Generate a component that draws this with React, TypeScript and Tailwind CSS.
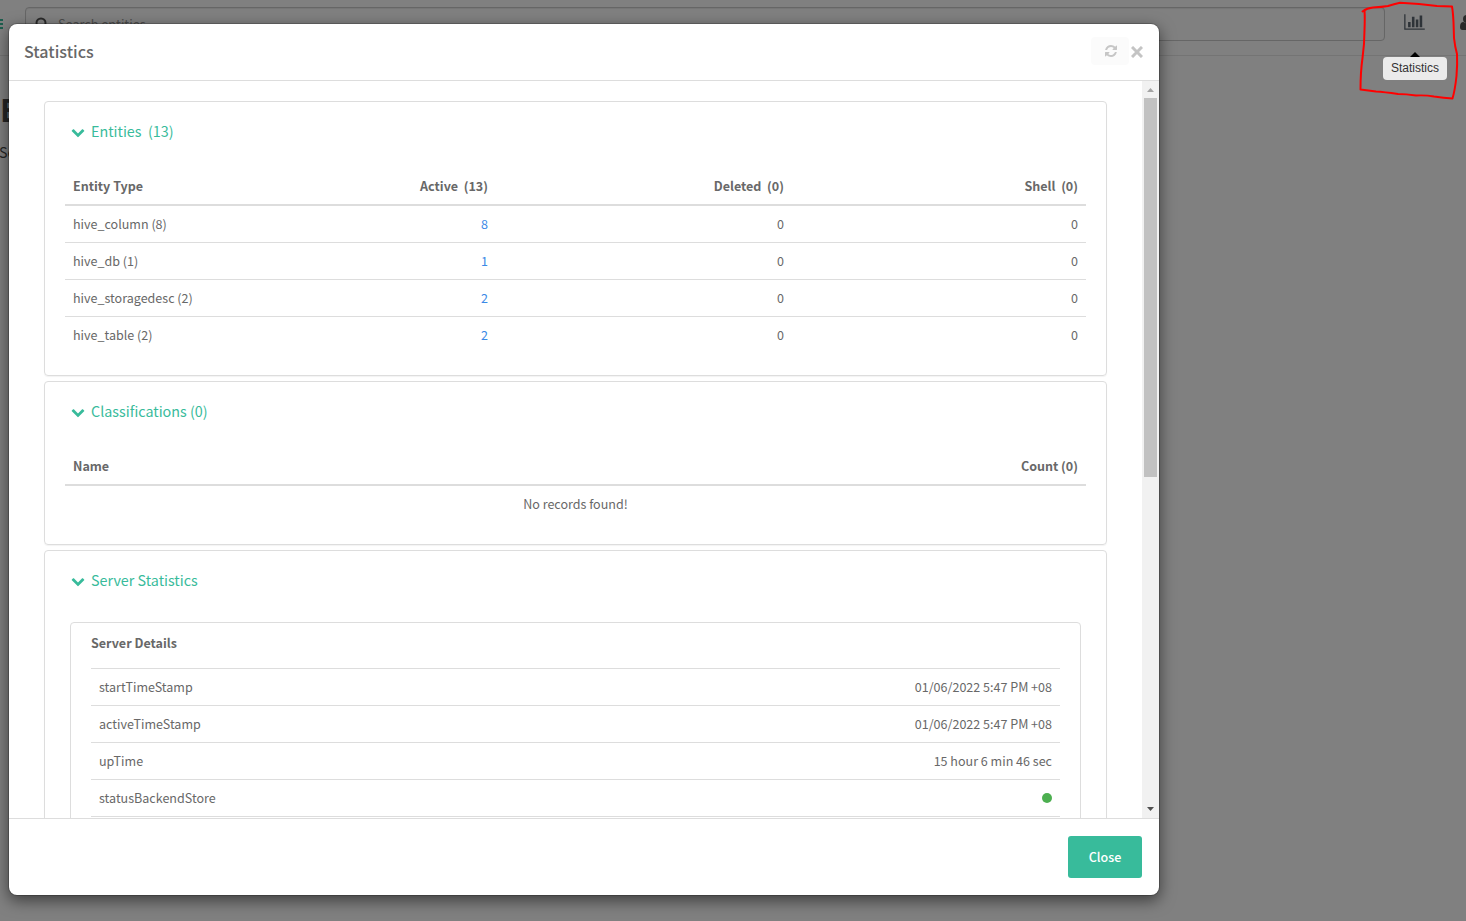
import React from 'react'

interface EntityRow {
  name: string
  active: number
  deleted: number
  shell: number
}

interface ServerRow {
  label: string
  value?: string
}

const ENTITIES: EntityRow[] = [
  { name: 'hive_column (8)', active: 8, deleted: 0, shell: 0 },
  { name: 'hive_db (1)', active: 1, deleted: 0, shell: 0 },
  { name: 'hive_storagedesc (2)', active: 2, deleted: 0, shell: 0 },
  { name: 'hive_table (2)', active: 2, deleted: 0, shell: 0 },
]

const SERVER_DETAILS: ServerRow[] = [
  { label: 'startTimeStamp', value: '01/06/2022 5:47 PM +08' },
  { label: 'activeTimeStamp', value: '01/06/2022 5:47 PM +08' },
  { label: 'upTime', value: '15 hour 6 min 46 sec' },
  { label: 'statusBackendStore' },
]

function ChevronDown() {
  return (
    <svg viewBox="0 0 1792 1792" className="h-[14px] w-[14px] fill-current">
      <path d="M1683 808l-742 741q-19 19-45 19t-45-19l-742-741q-19-19-19-45.5t19-45.5l166-165q19-19 45-19t45 19l531 531 531-531q19-19 45-19t45 19l166 165q19 19 19 45.5t-19 45.5z" />
    </svg>
  )
}

function RefreshIcon() {
  return (
    <svg viewBox="0 0 1792 1792" className="h-[14px] w-[14px] fill-current">
      <path d="M1639 1056q0 5-1 7-64 268-268 434.5t-478 166.5q-146 0-282.5-55t-243.5-157l-129 129q-19 19-45 19t-45-19-19-45v-448q0-26 19-45t45-19h448q26 0 45 19t19 45-19 45l-137 137q71 66 161 102t187 36q134 0 250-65t186-179q11-17 53-117 8-23 30-23h192q13 0 22.5 9.5t9.5 22.5zm25-800v448q0 26-19 45t-45 19h-448q-26 0-45-19t-19-45 19-45l138-138q-148-137-349-137-134 0-250 65t-186 179q-11 17-53 117-8 23-30 23h-199q-13 0-22.5-9.5t-9.5-22.5v-7q65-268 270-434.5t480-166.5q146 0 284 55.5t245 156.5l130-129q19-19 45-19t45 19 19 45z" />
    </svg>
  )
}

function BarChartIcon() {
  return (
    <svg viewBox="0 0 2048 1792" className="h-[18px] w-[21px] fill-current">
      <path d="M640 896v512h-256v-512h256zm384-512v1024h-256v-1024h256zm1024 1152v128h-2048v-1536h128v1408h1920zm-640-896v768h-256v-768h256zm384-384v1152h-256v-1152h256z" />
    </svg>
  )
}

function Panel({ title, className = '', children }: { title: string; className?: string; children: React.ReactNode }) {
  return (
    <section className={`shrink-0 rounded-[4px] border border-[#ddd] px-5 shadow-[0_1px_1px_rgba(0,0,0,0.05)] ${className}`}>
      <div className="flex h-[66px] items-start gap-[6px] pt-[18px] pl-[6px] text-[#38bb9b]">
        <span className="mt-[5px]"><ChevronDown /></span>
        <h4 className="text-[14.33px] leading-[22px] whitespace-pre">{title}</h4>
      </div>
      {children}
    </section>
  )
}

function Page() {
  return (
    <div className="h-full">
      {/* Navbar */}
      <header className="flex h-14 border-b border-[#747474]">
        <div className="mt-[19px] flex w-[25px] shrink-0 flex-col gap-[2px]">
          <div className="h-[2px] w-[3px] bg-[#1c5e4e]" />
          <div className="h-[2px] w-[3px] bg-[#1c5e4e]" />
          <div className="h-[2px] w-[3px] bg-[#1c5e4e]" />
        </div>
        <div className="mt-[7px] flex h-[34px] w-[1360px] shrink-0 items-center rounded-[4px] border border-[#666] pl-[9px] shadow-[inset_0_1px_1px_rgba(0,0,0,0.075)]">
          <svg viewBox="0 0 14 14" className="h-[14px] w-[14px] fill-none stroke-[#2a2a2a] stroke-2">
            <circle cx="6" cy="6" r="4.5" />
            <path d="M9.5 9.5l4 4" />
          </svg>
          <span className="ml-[9px] text-[12.7px] leading-5 text-[#4c4c4c]">Search entities</span>
        </div>
        <div className="mt-[13px] ml-[19px] shrink-0 text-[#2e3338]"><BarChartIcon /></div>
        <svg viewBox="0 0 14 16" className="mt-[14px] ml-[35px] h-4 w-[14px] shrink-0 fill-[#2a2a2a]">
          <circle cx="7" cy="5" r="4" />
          <path d="M0 13q0-5 3.500-5q3.500 2.500 7 0q3.500 0 3.500 5q0 3-2.500 3h-9q-2.500 0-2.500-3z" />
        </svg>
      </header>
      <div className="text-[#262626]">
        <h1 className="mt-[31px] text-[31px] leading-[44px] font-bold">E</h1>
        <p className="mt-[10px] ml-[-1px] text-[14.33px] leading-[22px]">Se</p>
      </div>
    </div>
  )
}

function EntitiesTable() {
  return (
    <table className="w-full table-fixed">
      <colgroup>
        <col className="w-[200px]" />
        <col className="w-[231px]" />
        <col className="w-[296px]" />
        <col className="w-[294px]" />
      </colgroup>
      <thead>
        <tr className="h-[37px] border-b-2 border-[#ddd] text-right font-bold whitespace-pre">
          <th className="px-2 text-left">Entity Type</th>
          <th className="px-2">Active  (13)</th>
          <th className="px-2">Deleted  (0)</th>
          <th className="px-2">Shell  (0)</th>
        </tr>
      </thead>
      <tbody>
        {ENTITIES.map((row) => (
          <tr key={row.name} className="h-[37px] border-b border-[#ddd] text-right last:border-b-0">
            <td className="px-2 text-left">{row.name}</td>
            <td className="px-2 text-[#3b8ae6]">{row.active}</td>
            <td className="px-2">{row.deleted}</td>
            <td className="px-2">{row.shell}</td>
          </tr>
        ))}
      </tbody>
    </table>
  )
}

function Scrollbar() {
  return (
    <div className="flex w-[17px] flex-col items-center bg-[#f1f1f1]">
      <svg viewBox="0 0 17 17" className="h-[17px] w-[17px] shrink-0 fill-[#a3a3a3]">
        <path d="M5 11l3.500-4l3.500 4z" />
      </svg>
      <div className="h-[379px] w-[13px] bg-[#c1c1c1]" />
      <svg viewBox="0 0 17 17" className="mt-auto h-[17px] w-[17px] shrink-0 fill-[#505050]">
        <path d="M5 6l3.500 4l3.500-4z" />
      </svg>
    </div>
  )
}

function StatisticsModal() {
  return (
    <div className="absolute top-[23px] left-2 flex h-[873px] w-[1152px] flex-col rounded-[9px] border border-black/20 bg-white bg-clip-padding text-[#686868] shadow-[0_5px_15px_rgba(0,0,0,0.5)]">
      <div className="flex h-[57px] shrink-0 items-center border-b border-[#ddd] pr-4 pl-[15px]">
        <h4 className="mb-[2px] flex-1 text-[16.1px] leading-6 font-medium">Statistics</h4>
        <button className="mb-[3px] flex h-7 w-[38px] items-center justify-center rounded-[4px] bg-[#fbfbfb] pl-px text-[#c6c6c6]">
          <RefreshIcon />
        </button>
        <svg viewBox="0 0 12 12" className="ml-[2px] h-3 w-3 stroke-[#c4c4c4] stroke-[3]">
          <path d="M1 1l10 10M11 1l-10 10" />
        </svg>
      </div>

      <div className="flex h-[737px] shrink-0">
        <div className="flex flex-1 flex-col gap-[5px] overflow-hidden px-[35px] pt-5 text-[12.54px] leading-5">
          <Panel title="Entities  (13)" className="h-[275px]">
            <EntitiesTable />
          </Panel>

          <Panel title="Classifications (0)" className="h-[164px]">
            <div className="flex h-[38px] items-center justify-between border-b-2 border-[#ddd] px-2 font-bold">
              <span>Name</span>
              <span>Count (0)</span>
            </div>
            <div className="flex h-9 items-center justify-center">No records found!</div>
          </Panel>

          <Panel title="Server Statistics" className="h-[400px]">
            <div className="mx-[5px] mt-[5px] h-[300px] rounded-[4px] border border-[#ddd] px-5">
              <div className="flex h-[45px] items-center pb-[6px] font-bold">Server Details</div>
              {SERVER_DETAILS.map((row) => (
                <div key={row.label} className="flex h-[37px] items-center justify-between border-t border-[#ddd] px-2">
                  <span>{row.label}</span>
                  {row.value ? <span>{row.value}</span> : <span className="h-[10px] w-[10px] rounded-full bg-[#4caf50]" />}
                </div>
              ))}
              <div className="border-t border-[#ddd]" />
            </div>
          </Panel>
        </div>
        <Scrollbar />
      </div>

      <div className="flex flex-1 items-center justify-end border-t border-[#ddd] pr-[17px]">
        <button className="h-[42px] w-[74px] rounded-[3px] bg-[#38bb9b] text-[12.54px] font-medium text-white">Close</button>
      </div>
    </div>
  )
}

export default function App() {
  return (
    <div className="relative h-[921px] w-[1466px] overflow-hidden bg-[#808080] font-['Noto_Sans_CJK_SC',sans-serif]">
      <Page />
      <StatisticsModal />

      {/* Tooltip */}
      <div className="absolute top-[52px] left-[1383px] flex w-16 flex-col items-center">
        <div className="h-[5px] w-[10px] bg-black [clip-path:polygon(50%_0,100%_100%,0_100%)]" />
        <div className="h-[23px] w-full rounded-[4px] bg-[#ebebeb] text-center font-['Liberation_Sans',sans-serif] text-xs leading-[22px] text-[#333]">
          Statistics
        </div>
      </div>

      {/* Hand drawn marker */}
      <svg viewBox="0 0 126 110" className="absolute top-0 left-[1340px] h-[110px] w-[126px] fill-none stroke-[#ff0000] stroke-2">
        <path
          strokeLinecap="round"
          strokeLinejoin="round"
          d="M22.500 11.500Q27 8 33 7.500Q42 7 48 6Q54 4 60 2.800L79 4L97 6L112 6.500Q113 12 113.500 22L114 38Q115 47 117 54Q117.500 64 116.500 76Q115 90 112.500 98.500Q104 98 94 96.500Q86 95 76 95.500Q66 94 58 94Q44 92 36 91.500L20.500 89.500Q20.500 72 22.500 58Q24.500 44 24.500 30Q25 18 24.500 10.500"
        />
      </svg>
    </div>
  )
}
